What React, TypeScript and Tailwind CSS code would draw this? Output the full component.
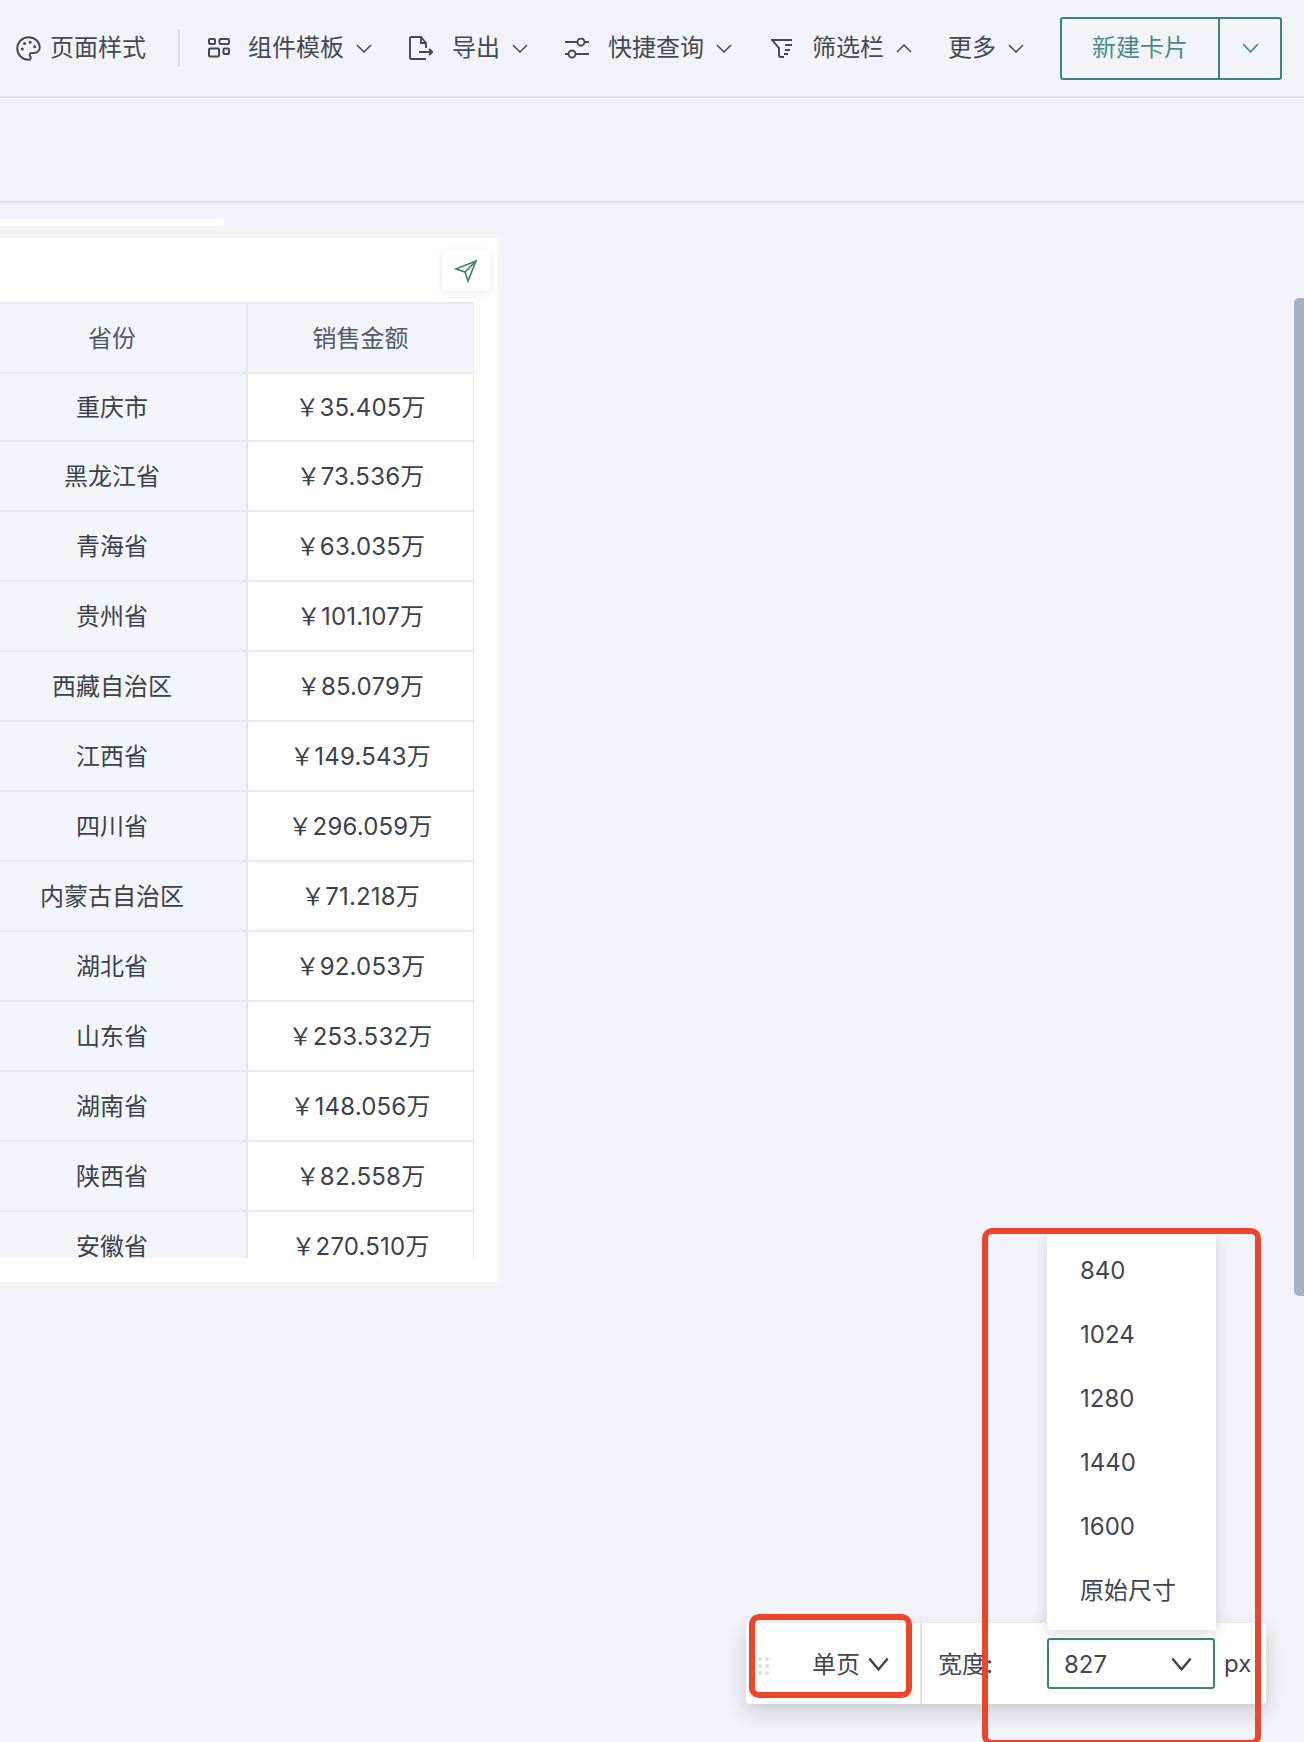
import { Palette } from 'lucide-react';

const fontStack = 'font-[Inter,"Noto_Sans_CJK_SC",sans-serif]';

const rows = [
  ['重庆市', '\uFFE535.405万'],
  ['黑龙江省', '\uFFE573.536万'],
  ['青海省', '\uFFE563.035万'],
  ['贵州省', '\uFFE5101.107万'],
  ['西藏自治区', '\uFFE585.079万'],
  ['江西省', '\uFFE5149.543万'],
  ['四川省', '\uFFE5296.059万'],
  ['内蒙古自治区', '\uFFE571.218万'],
  ['湖北省', '\uFFE592.053万'],
  ['山东省', '\uFFE5253.532万'],
  ['湖南省', '\uFFE5148.056万'],
  ['陕西省', '\uFFE582.558万'],
  ['安徽省', '\uFFE5270.510万'],
];

const widths = ['840', '1024', '1280', '1440', '1600', '原始尺寸'];

function Chevron({ up = false, className = '', strokeWidth = 1.5 }: { up?: boolean; className?: string; strokeWidth?: number }) {
  return (
    <svg viewBox="0 0 16 9" fill="none" stroke="currentColor" strokeWidth={strokeWidth} preserveAspectRatio="none" className={className}>
      <polyline points={up ? '1,8 8,1 15,8' : '1,1 8,8 15,1'} />
    </svg>
  );
}

function TemplateIcon() {
  return (
    <svg viewBox="0 0 22 20" fill="none" stroke="currentColor" strokeWidth="2" className="mr-[18px] h-[20px] w-[22px]">
      <rect x="1" y="1" width="6" height="5" rx="1" />
      <rect x="11.500" y="1" width="9.500" height="5" rx="1" />
      <rect x="1" y="10.500" width="10" height="8" rx="1" />
      <rect x="15.500" y="10.500" width="5.500" height="5.500" rx="1" />
    </svg>
  );
}

function ExportIcon() {
  return (
    <svg viewBox="0 0 24 24" fill="none" stroke="currentColor" strokeWidth="1.9" className="mr-[19px] h-6 w-6">
      <path d="M17 23H2a1 1 0 0 1-1-1V2a1 1 0 0 1 1-1h10l5 6v5" />
      <path d="M12 1v6h5" />
      <path d="M10 16h13M20 13l3.300 3-3.300 3" />
    </svg>
  );
}

function SlidersIcon() {
  return (
    <svg viewBox="0 0 24 21" fill="none" stroke="currentColor" strokeWidth="1.9" className="mr-[19px] h-[21px] w-6">
      <path d="M0 4h12.500M19.500 4H24M0 16h3.500M10.500 16H24" />
      <circle cx="16" cy="4" r="3.500" />
      <circle cx="7" cy="16" r="3.500" />
    </svg>
  );
}

function FilterIcon() {
  return (
    <svg viewBox="0 0 21 21" fill="none" stroke="currentColor" strokeWidth="1.9" className="mr-[20px] h-[21px] w-[21px]">
      <path d="M21 2H1l7 8v7a2 2 0 0 0 2 2h3" />
      <path d="M14 7h7M14 12h5M13 16h4" />
    </svg>
  );
}

function ToolItem({ icon, label, up, hasChevron = true }: { icon?: React.ReactNode; label: string; up?: boolean; hasChevron?: boolean }) {
  return (
    <div className="flex items-center text-[#434a54]">
      {icon}
      <span className="text-[24px] leading-none">{label}</span>
      {hasChevron && <Chevron up={up} className="ml-[12px] h-[9px] w-[16px]" />}
    </div>
  );
}

export default function App() {
  return (
    <div className={`relative h-[1742px] w-[1304px] overflow-hidden bg-[#f3f4f9] ${fontStack}`}>
      {/* Toolbar */}
      <div className="flex h-[98px] items-center border-b-2 border-[#e2e4e9] pl-[16px]">
        <ToolItem icon={<Palette className="-ml-[1px] mr-[8px] h-[27px] w-[27px]" strokeWidth={1.7} />} label="页面样式" hasChevron={false} />
        <div className="ml-[32px] mr-[28px] h-[38px] w-[2px] bg-[#dfe1e6]" />
        <ToolItem icon={<TemplateIcon />} label="组件模板" />
        <div className="w-[37px]" />
        <ToolItem icon={<ExportIcon />} label="导出" />
        <div className="w-[37px]" />
        <ToolItem icon={<SlidersIcon />} label="快捷查询" />
        <div className="w-[39px]" />
        <ToolItem icon={<FilterIcon />} label="筛选栏" up />
        <div className="w-[36px]" />
        <ToolItem label="更多" />
        <div className="ml-[36px] flex h-[63px] w-[222px] rounded-[3px] border-2 border-[#3f817d] text-[#4c8b87]">
          <div className="flex w-[158px] items-center justify-center border-r-2 border-[#3f817d] text-[24px] leading-none">新建卡片</div>
          <div className="flex flex-1 items-center justify-center">
            <Chevron className="h-[10px] w-[17px]" />
          </div>
        </div>
      </div>

      {/* Filter band */}
      <div className="h-[105px] border-b-2 border-[#e2e4e9]" />

      {/* Card */}
      <div className="mt-[16px] h-[7px] w-[224px] rounded-r-[3px] bg-white" />
      <div className="relative mt-[12px] h-[1044px] w-[498px] rounded-r-[4px] bg-white pt-[64px]">
        <div className="absolute left-[442px] top-[12px] flex h-[41px] w-[48px] items-center justify-center rounded-[4px] bg-white text-[#3f817d] shadow-[0_2px_8px_rgba(30,40,60,0.1)]">
          <svg viewBox="0 0 24 24" fill="none" stroke="currentColor" strokeWidth="1.7" className="h-[24px] w-[24px]">
            <path d="M2 10 22 2 14 22 11 13Z" />
            <path d="M11 13 22 2" />
          </svg>
        </div>
        <div className="h-[956px] w-[474px] overflow-hidden">
          <table className="ml-[-24px] w-[497px] table-fixed border-collapse border-2 border-[#e6e9f0] text-[24px]">
            <colgroup>
              <col className="w-[270px]" />
              <col className="w-[227px]" />
            </colgroup>
            <thead>
              <tr className="h-[70px] bg-[#f2f5fa] text-[#525a68]">
                <th className="border-2 border-[#e6e9f0] pt-[2px] font-normal">省份</th>
                <th className="border-2 border-[#e6e9f0] pt-[2px] font-normal">销售金额</th>
              </tr>
            </thead>
            <tbody>
              {rows.map(([province, amount]) => (
                <tr key={province} className="h-[70px] text-[#3c4249] first:h-[68px]">
                  <td className="border-2 border-[#e6e9f0] bg-[#f2f5fa] pt-[2px] text-center">{province}</td>
                  <td className="border-2 border-[#e6e9f0] pt-[2px] text-center tracking-[0.2px]">{amount}</td>
                </tr>
              ))}
            </tbody>
          </table>
        </div>
      </div>

      {/* Scrollbar */}
      <div className="absolute left-[1294px] top-[298px] h-[998px] w-[10px] rounded-l-[5px] bg-[#a5b2c3]" />

      {/* Bottom bar */}
      <div className="absolute left-[746px] top-[1623px] flex h-[81px] w-[520px] items-center rounded-[4px] bg-white text-[24px] text-[#41474f] shadow-[0_8px_20px_rgba(30,40,60,0.2)]">
        <div className="relative flex h-full w-[176px] items-center border-r-2 border-[#e2e4e9] pl-[66px] pt-[3px]">
          <div className="absolute left-[12px] top-[34px] grid grid-cols-2 gap-[3px]">
            {[0, 1, 2, 3, 4, 5].map((dot) => (
              <span key={dot} className="h-[4px] w-[4px] rounded-full bg-[#d9dde5]" />
            ))}
          </div>
          <span>单页</span>
          <Chevron className="-mt-[3px] ml-[8px] h-[14px] w-[21px]" strokeWidth={1.7} />
        </div>
        <span className="ml-[16px] w-[109px] pt-[3px]">宽度:</span>
        <div className="flex h-[51px] w-[168px] items-center justify-between rounded-[3px] border-2 border-[#3f817d] pl-[15px] pr-[21px]">
          <span className="pt-[3px]">827</span>
          <Chevron className="h-[14px] w-[21px]" strokeWidth={1.7} />
        </div>
        <span className="ml-[9px]">px</span>
      </div>

      {/* Width dropdown */}
      <div className="absolute left-[1047px] top-[1235px] h-[395px] w-[169px] rounded-b-[4px] bg-white pl-[33px] text-[24px] text-[#41474f] shadow-[0_4px_14px_rgba(30,40,60,0.16)]">
        {widths.map((width) => (
          <div key={width} className="flex h-[64px] items-center first:mt-[4px]">
            {width}
          </div>
        ))}
      </div>

      {/* Red annotations */}
      <div className="absolute left-[982px] top-[1228px] h-[518px] w-[279px] rounded-[10px] border-[6px] border-[#ef4429]" />
      <div className="absolute left-[749px] top-[1614px] h-[84px] w-[163px] rounded-[10px] border-[6px] border-[#ef4429]" />
    </div>
  );
}
